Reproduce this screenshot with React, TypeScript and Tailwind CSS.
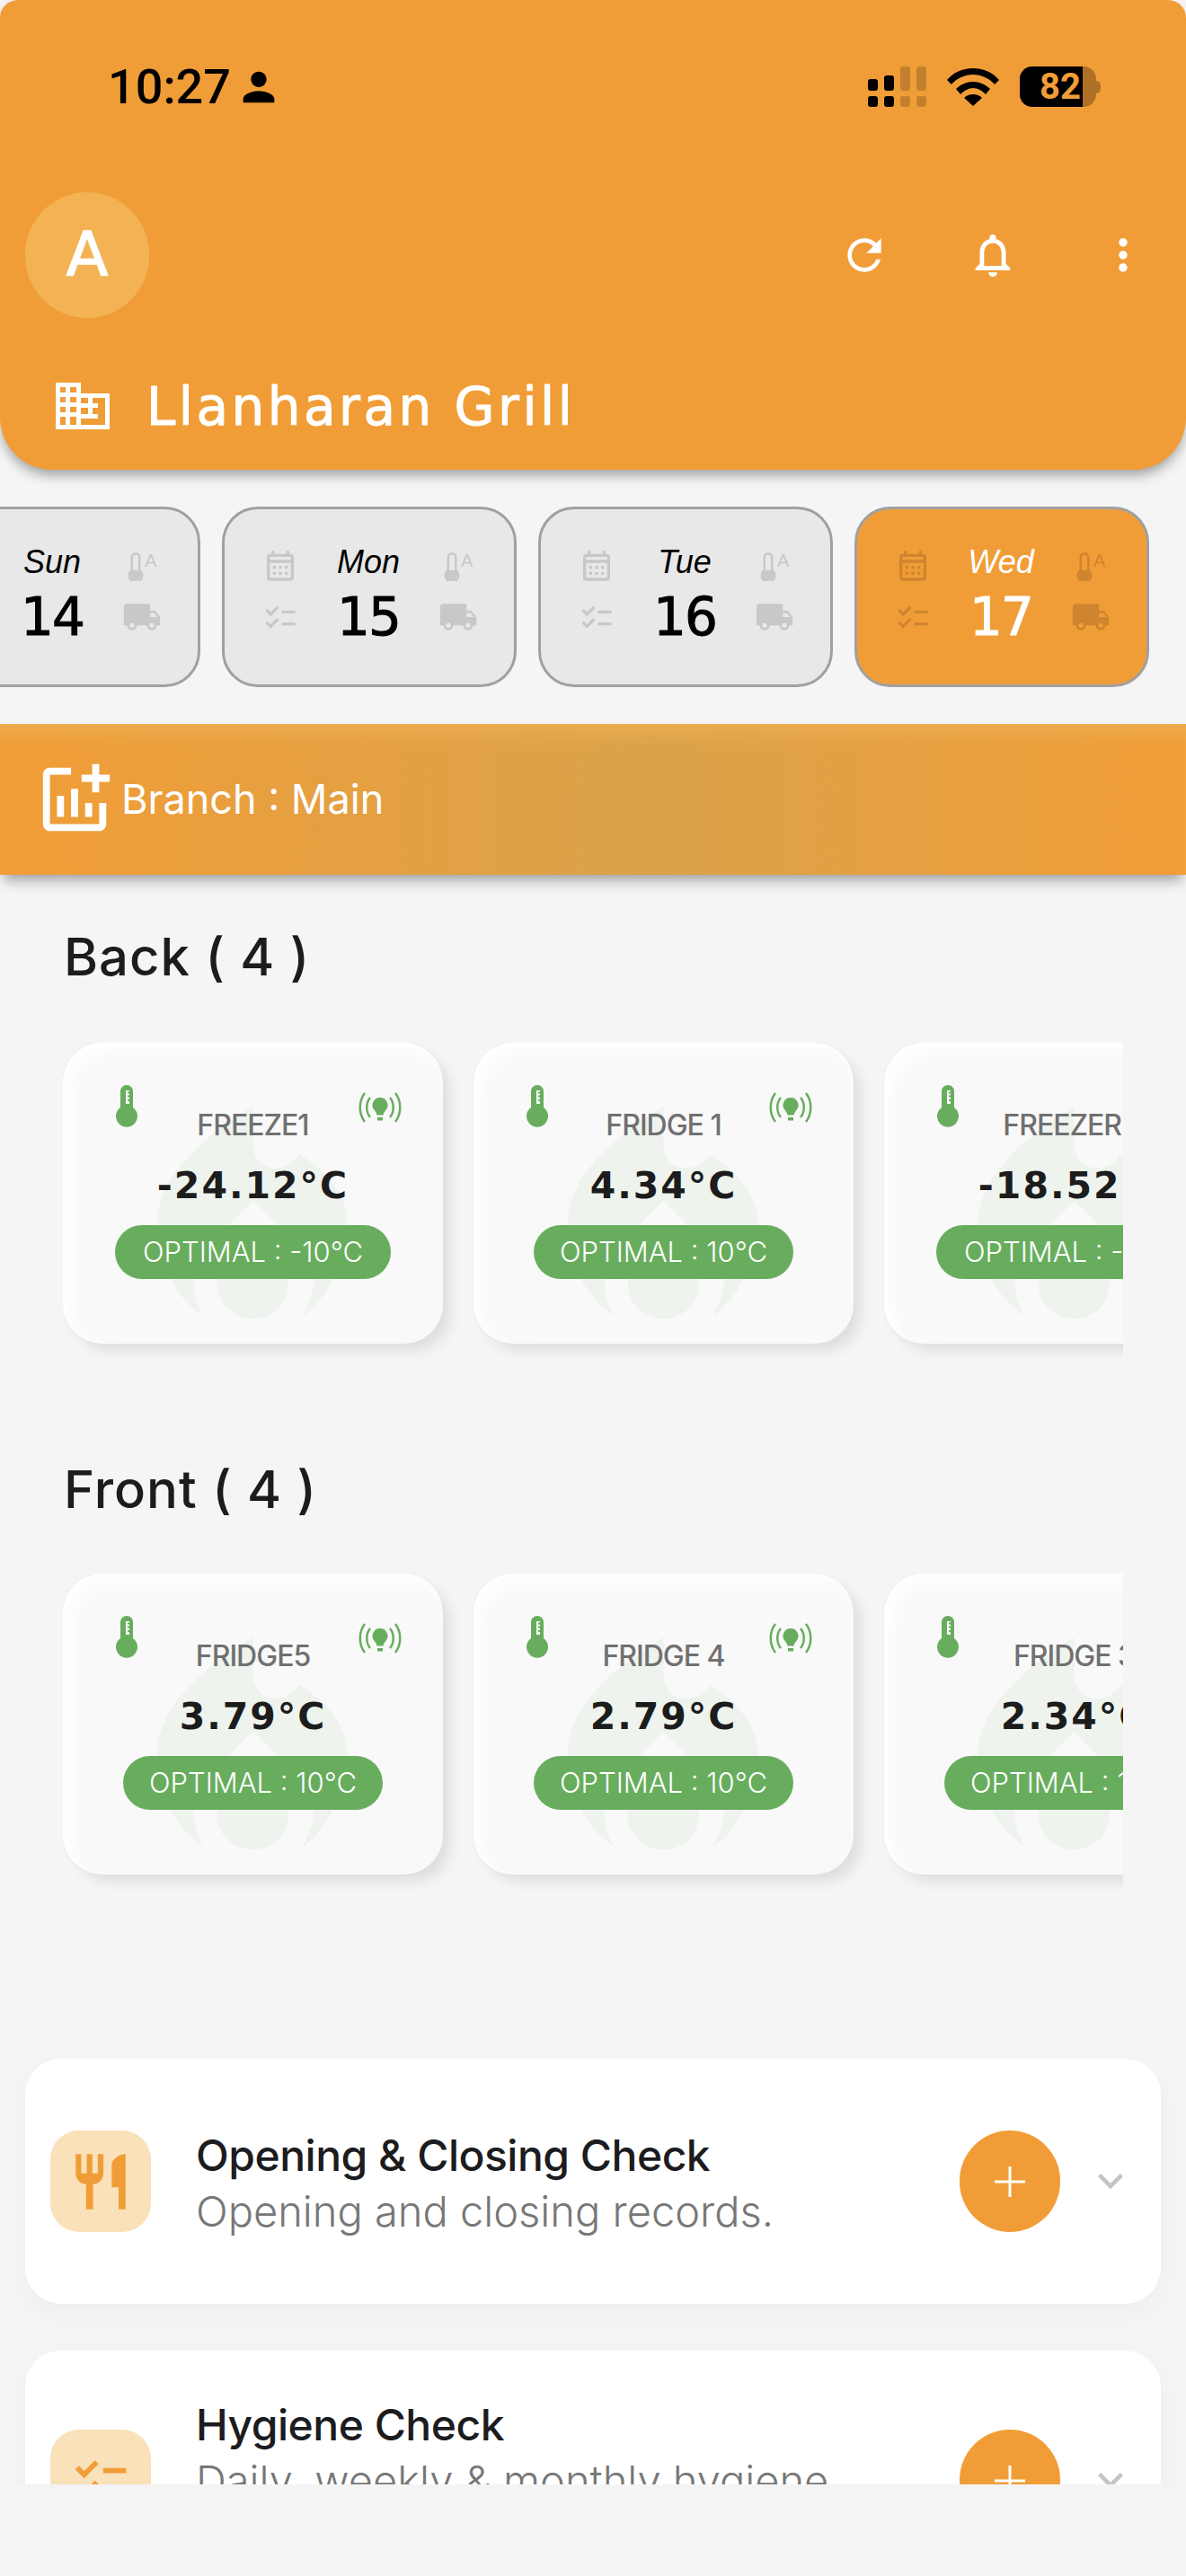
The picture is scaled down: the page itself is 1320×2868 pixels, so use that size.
import { MdChecklist, MdExpandMore, MdLocalShipping, MdMoreVert, MdOutlineAddchart, MdOutlineCalendarMonth, MdOutlineNotifications, MdPerson, MdRefresh, MdRestaurant } from "react-icons/md";

const ThermoOutline = ({ className }: { className: string }) => (
    <svg viewBox="0 0 18 32" className={className} fill="currentColor">
        <path fillRule="evenodd" d="M3.500 5.500a5.500 5.500 0 0 1 11 0v13.700a8.500 8.500 0 1 1-11 0zM6 5.500V20.500a6 6 0 1 0 6 0V5.500a3 3 0 0 0-6 0z" />
        <path d="M3.500 20h11v2a7 7 0 0 1-11 8a7 7 0 0 1 0-10z" />
    </svg>
);

const DayCard = ({ label, day, active, first }: { label: string; day: string; active?: boolean; first?: boolean }) => {
    const iconColor = active ? "text-[#cf852f]" : "text-[#c8c8c8]";
    return (
        <div className={`shrink-0 w-[328px] h-[201px] rounded-[40px] border-[3px] border-[#a0a0a0] pl-[42px] pr-[40px] pt-[41px] ${active ? "bg-[#f19d37] text-white" : "bg-[#e8e8e8] text-black"} ${first ? "ml-[-105px]" : ""}`}>
            <div className="grid grid-cols-[40px_1fr_44px] grid-rows-[44px_70px] items-center">
                <MdOutlineCalendarMonth className={`${iconColor} w-[40px] h-[40px]`} />
                <div className="text-center text-[36px] leading-[40px] mt-[-8px] italic font-['Liberation_Sans',sans-serif]">{label}</div>
                <div className={`${iconColor} flex items-start pl-[6px]`}>
                    <ThermoOutline className="w-[18px] h-[32px] shrink-0 mt-[1px]" />
                    <span className="text-[20px] leading-[20px] ml-[1px] font-['Liberation_Sans',sans-serif]">A</span>
                </div>
                <MdChecklist className={`${iconColor} w-[40px] h-[40px] mt-[2px]`} />
                <div className="text-center text-[58px] leading-[60px] font-['DejaVu_Sans',sans-serif] tracking-[-2px] [-webkit-text-stroke:1px_currentColor]">{day}</div>
                <MdLocalShipping className={`${iconColor} w-[44px] h-[44px]`} />
            </div>
        </div>
    );
};

const Flame = () => (
    <svg viewBox="0 0 640 712" className="absolute left-[105px] top-[71px] w-[213px] h-[237px] text-[#eef3ee]" fill="currentColor">
        <path d="M320 0L320 125C320 175 355 207 395 205C430 205 460 185 475 160C570 215 635 300 635 385C635 500 570 650 485 700C510 650 525 610 525 575C525 500 470 460 405 400L320 315L235 400C170 465 122 520 122 590C122 630 135 670 155 700C60 640 0 520 0 385C0 230 170 90 320 0Z" />
        <path d="M320 410C390 470 438 530 438 595C438 660 385 710 320 710C255 710 200 660 200 595C200 530 250 470 320 410Z" />
    </svg>
);

const SensorCard = ({ name, temp, optimal, pillWidth }: { name: string; temp: string; optimal: string; pillWidth: string }) => (
    <div className="relative shrink-0 w-[423px] h-[335px] rounded-[44px] bg-[#f9f9f9] shadow-[inset_10px_10px_20px_#ffffff,10px_10px_14px_-2px_#dedede,0_0_0_1px_#eeeeee]">
        <Flame />
        <svg viewBox="0 0 24 47" className="absolute left-[59px] top-[47px] w-[24px] h-[47px] text-[#68ad5e]" fill="currentColor">
            <path fillRule="evenodd" d="M5 6.500a7 6.500 0 0 1 14 0v18.500a12 12 0 1 1-14 0zM11 6v15h4v-3h-2v-2h2v-2.500h-2v-2h2V9.500h-2v-2h2V6z" />
        </svg>
        <svg viewBox="0 0 48 36" className="absolute left-[329px] top-[54px] w-[48px] h-[36px] text-[#68ad5e]" fill="none" stroke="currentColor" strokeWidth="2.500">
            <path d="M7 2C0 11 0 25 7 34M41 2C48 11 48 25 41 34M13 7C8 13 8 23 13 29M35 7C40 13 40 23 35 29" />
            <path fill="currentColor" stroke="none" d="M24 7a8.500 8.500 0 0 1 6 14.500c-1.500 1.500-2 3-2.500 5h-7c-.5-2-1-3.500-2.500-5A8.500 8.500 0 0 1 24 7zM21 29h6v3.500h-6z" />
        </svg>
        <div className="relative flex flex-col items-center pt-[70px]">
            <div className="text-[32px] leading-[44px] font-medium text-[#707070] font-['Inter',sans-serif] tracking-[-1px] whitespace-nowrap">{name}</div>
            <div className="mt-[17px] text-[41px] leading-[56px] font-bold text-[#1c1c1c] font-['DejaVu_Sans',sans-serif] tracking-[2px] whitespace-nowrap">{temp}</div>
            <div className={`mt-[16px] h-[60px] rounded-full bg-[#68ad5e] text-white text-[31px] font-light font-['Inter',sans-serif] flex items-center justify-center whitespace-nowrap ${pillWidth}`}>OPTIMAL : {optimal}</div>
        </div>
    </div>
);

const CheckCard = ({ title, sub, icon, topClass, textClass }: { title: string; sub: string; icon: React.ReactNode; topClass: string; textClass: string }) => (
    <div className={`h-[273px] shrink-0 rounded-[40px] bg-white shadow-[0_10px_30px_rgba(0,0,0,0.035)] flex items-start pl-[28px] pr-[28px] ${topClass}`}>
        <div className="w-[112px] h-[113px] shrink-0 rounded-[32px] bg-[#f9e1b9] flex items-center justify-center text-[#f19d37]">{icon}</div>
        <div className={`ml-[50px] font-['Inter',sans-serif] ${textClass}`}>
            <div className="text-[48px] leading-[62px] font-medium text-[#1c1c1e] tracking-[-0.5px] whitespace-nowrap">{title}</div>
            <div className="text-[47px] leading-[62px] font-light text-[#777777] whitespace-nowrap">{sub}</div>
        </div>
        <div className="ml-auto w-[112px] h-[113px] shrink-0 rounded-full bg-[#f19d37] flex items-center justify-center">
            <svg viewBox="0 0 34 34" className="w-[34px] h-[34px]" stroke="white" strokeWidth="3">
                <path d="M17 0V34M0 17H34" />
            </svg>
        </div>
        <MdExpandMore className="shrink-0 w-[56px] h-[56px] ml-[28px] mt-[28px] text-[#c4c4c4]" />
    </div>
);

const App = () => {
    return (
        <div className="w-[1320px] h-[2868px] overflow-hidden bg-[#f5f5f5] flex flex-col">
            <div className="h-[2766px] overflow-hidden shrink-0">
                {/* header */}
                <div className="relative z-10 h-[523px] rounded-t-[20px] rounded-b-[58px] bg-[#f19d37] shadow-[0_8px_14px_-2px_rgba(0,0,0,0.35)] pt-[74px] px-[28px]">
                    <div className="flex items-center h-[45px]">
                        <div className="ml-[92px] text-[54px] font-medium text-black font-['Roboto',sans-serif] leading-[45px]">10:27</div>
                        <MdPerson className="w-[52px] h-[52px] ml-[5px] text-black" />
                        <div className="ml-auto flex items-center gap-[23px] pr-[67px]">
                            <div className="grid grid-cols-[11px_11px_11px_11px] gap-x-[7px] gap-y-[6px] items-end">
                                <div className="h-[13px] rounded-[3px] bg-black"></div>
                                <div className="h-[17px] rounded-[3px] bg-black"></div>
                                <div className="h-[27px] rounded-[3px] bg-[#c2802f]"></div>
                                <div className="h-[27px] rounded-[3px] bg-[#c2802f]"></div>
                                <div className="h-[12px] rounded-[3px] bg-black"></div>
                                <div className="h-[12px] rounded-[3px] bg-black"></div>
                                <div className="h-[12px] rounded-[3px] bg-[#c2802f]"></div>
                                <div className="h-[12px] rounded-[3px] bg-[#c2802f]"></div>
                            </div>
                            <svg viewBox="0 0 58 42" className="w-[58px] h-[42px]" fill="black">
                                <path d="M29 0C41 0 51 5 58 13L53 18C47 11 38 7 29 7C20 7 11 11 5 18L0 13C7 5 17 0 29 0Z" />
                                <path d="M29 15C36 15 43 18 48 23L43 29C39 25 34 22 29 22C24 22 19 25 15 29L10 23C15 18 22 15 29 15Z" />
                                <path d="M29 29C33 29 36 30 39 33L29 42L19 33C22 30 25 29 29 29Z" />
                            </svg>
                            <div className="flex items-center">
                                <div className="w-[85px] h-[45px] rounded-[14px] overflow-hidden flex bg-[#ad7026]">
                                    <div className="w-[70px] h-[45px] bg-black text-[#f19d37] text-[40px] font-bold leading-[45px] text-right pr-[2px] font-['Roboto',sans-serif]">82</div>
                                </div>
                                <div className="w-[5px] h-[14px] rounded-r-full bg-[#ad7026]"></div>
                            </div>
                        </div>
                    </div>
                    <div className="mt-[95px] flex items-center">
                        <div className="w-[138px] h-[140px] rounded-full bg-[#f3b254] flex items-center justify-center text-white text-[68px] font-['DejaVu_Sans',sans-serif] [-webkit-text-stroke:1.5px_currentColor]">A</div>
                        <MdRefresh className="ml-auto w-[56px] h-[56px] text-white" />
                        <MdOutlineNotifications className="ml-[86px] w-[58px] h-[58px] text-white" />
                        <MdMoreVert className="ml-[88px] mr-[14px] w-[56px] h-[56px] text-white" />
                    </div>
                    <div className="mt-[72px] flex items-center h-[52px] pl-[34px]">
                        <svg viewBox="0 0 60 52" className="w-[60px] h-[52px] text-white" fill="currentColor">
                            <path fillRule="evenodd" d="M0 0h28v12h32v40H0zM5 5v6h6V5zm11 0v6h7V5zM5 16v6h6v-6zm11 0v6h7v-6zM5 27v6h6v-6zm11 0v6h7v-6zM5 38v9h6v-9zm11 0v9h7v-9zM28 17v6h8v-6zm0 11v7h8v-7zm0 12v7h27V17H41v6h6v5h-6v7h6v5z" />
                        </svg>
                        <div className="ml-[41px] mt-[3px] text-[58px] text-white font-['DejaVu_Sans',sans-serif] whitespace-nowrap tracking-[3.5px] [-webkit-text-stroke:1px_currentColor]">Llanharan Grill</div>
                    </div>
                </div>

                {/* days */}
                <div className="flex gap-[24px] overflow-hidden mt-[41px]">
                    <DayCard first label="Sun" day="14" />
                    <DayCard label="Mon" day="15" />
                    <DayCard label="Tue" day="16" />
                    <DayCard active label="Wed" day="17" />
                </div>

                {/* branch */}
                <div className="mt-[41px] h-[168px] flex items-center pl-[36px] bg-[linear-gradient(90deg,#f19d37_0%,#dba24a_55%,#f19d37_100%)] shadow-[0_10px_14px_-4px_rgba(0,0,0,0.35),inset_0_20px_20px_-10px_#edae52]">
                    <MdOutlineAddchart className="w-[94px] h-[94px] text-white" />
                    <div className="ml-[5px] text-[45px] text-white font-['Inter',sans-serif] whitespace-nowrap">Branch : Main</div>
                </div>

                {/* sensors */}
                <div className="mt-[51px] ml-[71px] text-[58px] leading-[80px] font-medium text-[#1c1c1e] font-['Inter',sans-serif] tracking-[1px]">Back ( 4 )</div>
                <div className="mt-[56px] ml-[70px] w-[1180px] h-[352px] overflow-hidden flex gap-[34px]">
                    <SensorCard name="FREEZE1" temp="-24.12°C" optimal="-10°C" pillWidth="w-[307px]" />
                    <SensorCard name="FRIDGE 1" temp="4.34°C" optimal="10°C" pillWidth="w-[289px]" />
                    <SensorCard name="FREEZER 3" temp="-18.52°C" optimal="-10°C" pillWidth="w-[307px]" />
                </div>

                <div className="mt-[105px] ml-[71px] text-[58px] leading-[80px] font-medium text-[#1c1c1e] font-['Inter',sans-serif] tracking-[1px]">Front ( 4 )</div>
                <div className="mt-[54px] ml-[70px] w-[1180px] h-[352px] overflow-hidden flex gap-[34px]">
                    <SensorCard name="FRIDGE5" temp="3.79°C" optimal="10°C" pillWidth="w-[289px]" />
                    <SensorCard name="FRIDGE 4" temp="2.79°C" optimal="10°C" pillWidth="w-[289px]" />
                    <SensorCard name="FRIDGE 3" temp="2.34°C" optimal="10°C" pillWidth="w-[289px]" />
                </div>

                {/* checks */}
                <div className="mt-[188px] px-[28px] flex flex-col gap-[52px]">
                    <CheckCard title="Opening & Closing Check" sub="Opening and closing records." topClass="pt-[80px]" textClass="mt-[-3px]" icon={<MdRestaurant className="w-[74px] h-[74px]" />} />
                    <CheckCard title="Hygiene Check" sub="Daily, weekly & monthly hygiene" topClass="pt-[88px]" textClass="mt-[-36px]" icon={<MdChecklist className="w-[68px] h-[68px]" />} />
                </div>
            </div>
            <div className="flex-1 bg-[#f4f4f4]"></div>
        </div>
    );
};

export default App;
